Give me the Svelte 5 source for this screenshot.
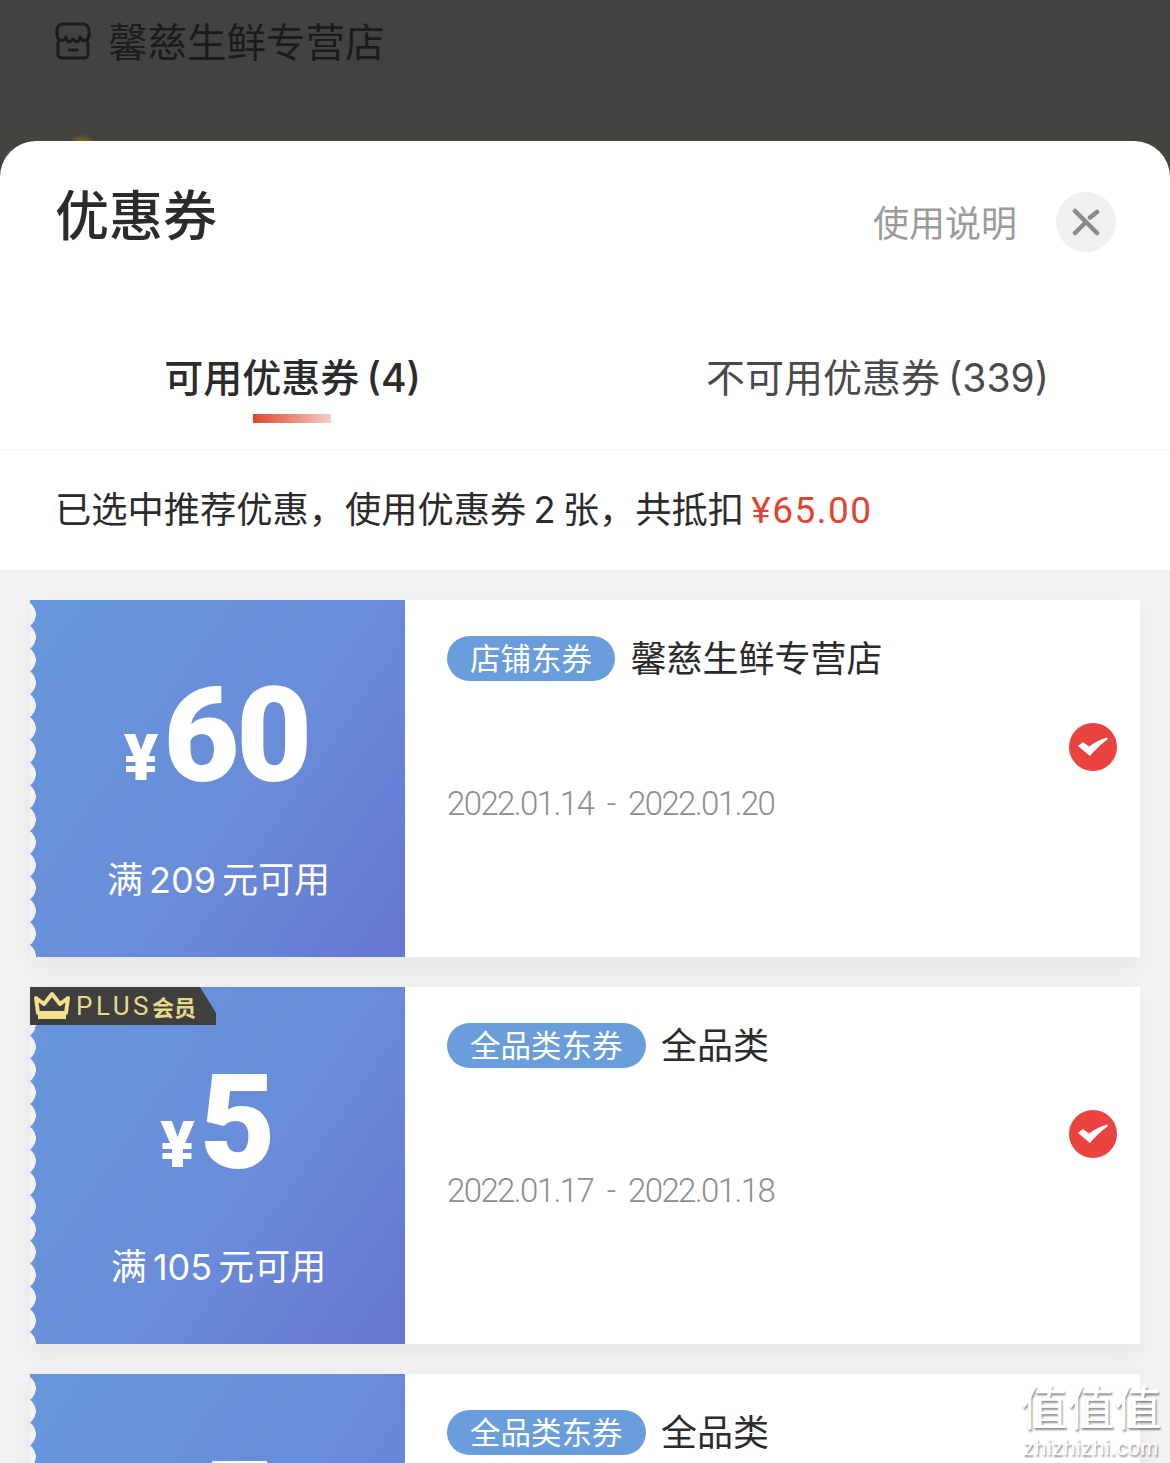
<script>
  const coupons = [
    { amount: '60', min: '满 209 元可用', tag: '店铺东券', name: '馨慈生鲜专营店', date: '2022.01.14 - 2022.01.20', plus: false },
    { amount: '5', min: '满 105 元可用', tag: '全品类东券', name: '全品类', date: '2022.01.17 - 2022.01.18', plus: true },
    { amount: '5', min: '满 105 元可用', tag: '全品类东券', name: '全品类', date: '2022.01.17 - 2022.01.18', plus: false }
  ];
</script>

<div class="page">
  <header class="shop">
    <svg class="shop-icon" viewBox="0 0 36 38" width="36" height="38" fill="none" stroke="#1b1b1b" stroke-width="3" stroke-linecap="round" stroke-linejoin="round">
      <path d="M2 13V8a6 6 0 0 1 6-6h20a6 6 0 0 1 6 6v5" />
      <path d="M2 13c1 7 7 7 9 2c2 6 3 6 7 2c4 4 5 4 7-2c2 5 8 5 9-2" />
      <path d="M3 20v12a4 4 0 0 0 4 4h22a4 4 0 0 0 4-4V20" />
      <path d="M14 28h8" />
    </svg>
    <span>馨慈生鲜专营店</span>
  </header>

  <section class="sheet">
    <div class="head">
      <h1>优惠券</h1>
      <div class="head-right">
        <span class="help">使用说明</span>
        <button class="close" aria-label="关闭">
          <svg viewBox="0 0 28 28" width="28" height="28" stroke="#8a8a8a" stroke-width="4.500" stroke-linecap="round">
            <path d="M3 3l22 22M3 25l9-9M18 9.500l7-5.500" />
          </svg>
        </button>
      </div>
    </div>

    <nav class="tabs">
      <div class="tab active">可用优惠券 (4)<i></i></div>
      <div class="tab">不可用优惠券 (339)</div>
    </nav>

    <p class="notice">已选中推荐优惠，使用优惠券 2 张，共抵扣 <b>¥65.00</b></p>

    <div class="list">
      {#each coupons as c}
        <article class="coupon">
          {#if c.plus}
            <div class="plus">
              <svg viewBox="0 0 38 30" width="38" height="30" fill="none" stroke="#f2e08e" stroke-width="4" stroke-linejoin="round">
                <path d="M3 7l8 6 8-10 8 10 8-6-2 15H5z" />
                <path d="M5 26h28" />
              </svg>
              <span class="plus-word">PLUS</span><span class="plus-cn">会员</span>
            </div>
          {/if}
          <div class="value">
            <div class="price"><span class="yen">¥</span><span class="num">{c.amount}</span></div>
            <div class="min">{c.min}</div>
          </div>
          <div class="info">
            <div class="title"><span class="tag">{c.tag}</span><span class="name">{c.name}</span></div>
            <div class="date">{c.date}</div>
          </div>
          <div class="check">
            <svg viewBox="0 0 48 48" width="48" height="48">
              <circle cx="24" cy="24" r="24" fill="#ea4340" />
              <path d="M9 23l5-4 6 4.500C26 19 32 16 38 14.500l1 1.500C32 21 26 27 21 33z" fill="#fff" />
            </svg>
          </div>
        </article>
      {/each}
    </div>
  </section>

  <div class="watermark">
    <span class="wm-big">值值值</span>
    <span class="wm-small">zhizhizhi.com</span>
  </div>
</div>

<style>
  :global(body) {
    margin: 0;
    background: #f2f2f2;
  }

  .page {
    position: relative;
    width: 1170px;
    height: 1463px;
    overflow: hidden;
    background: radial-gradient(circle 16px at 82px 150px, #7a6128 60%, transparent), linear-gradient(#424242 105px, #44433f 141px, #44433f 200px);
    font-family: "Inter", "Noto Sans CJK SC", "Noto Sans", sans-serif;
  }

  .shop {
    height: 141px;
    box-sizing: border-box;
    padding: 22px 0 0 55px;
    display: flex;
    align-items: flex-start;
    gap: 17px;
    color: #1b1b1b;
    font-size: 39.500px;
    line-height: 42px;
  }

  .sheet {
    background: #fff;
    border-radius: 36px 36px 0 0;
    overflow: hidden;
  }

  .head {
    height: 166px;
    box-sizing: border-box;
    padding: 44px 54px 0 55px;
    display: flex;
    justify-content: space-between;
    align-items: flex-start;
  }

  h1 {
    margin: 0;
    font-size: 54px;
    line-height: 64px;
    font-weight: 500;
    color: #2b2b2b;
  }

  .head-right {
    display: flex;
    align-items: flex-start;
    gap: 39px;
    margin-top: 7px;
  }

  .help {
    font-size: 36px;
    line-height: 64px;
    color: #9b9b9b;
  }

  .close {
    width: 60px;
    height: 60px;
    border: 0;
    padding: 0;
    border-radius: 50%;
    background: #f0f0f0;
    display: flex;
    align-items: center;
    justify-content: center;
  }

  .tabs {
    height: 142px;
    display: grid;
    grid-template-columns: 585px 585px;
    border-bottom: 1px solid #eee;
  }

  .tab {
    position: relative;
    text-align: center;
    padding-top: 44px;
    font-size: 39px;
    line-height: 54px;
    color: #4a4a4a;
    word-spacing: -3px;
  }

  .tab.active {
    font-weight: 500;
    color: #2b2b2b;
  }

  .tab i {
    position: absolute;
    left: 253px;
    top: 107px;
    width: 78px;
    height: 9px;
    background: linear-gradient(90deg, #e0452f, #f6cfc8);
  }

  .notice {
    margin: 0;
    height: 120px;
    box-sizing: border-box;
    padding: 0 0 0 55px;
    font-size: 36.250px;
    line-height: 120px;
    color: #2b2b2b;
    word-spacing: -3px;
  }

  .notice b {
    font-family: "Roboto", "Noto Sans", sans-serif;
    font-weight: 400;
    color: #df4530;
    font-size: 37px;
    letter-spacing: 1.500px;
  }

  .list {
    background: #f2f2f2;
    padding: 30px 30px 0;
    display: flex;
    flex-direction: column;
    gap: 30px;
  }

  .coupon {
    position: relative;
    height: 357px;
    flex: none;
    display: flex;
    background: #fff;
    box-shadow: 0 10px 26px rgba(0, 0, 0, 0.05);
  }

  .value {
    position: relative;
    width: 375px;
    flex: none;
    background: linear-gradient(125deg, #6697dc 0%, #6a8dd9 55%, #6776d2 100%);
    color: #fff;
    text-align: center;
  }

  .value::before {
    content: "";
    position: absolute;
    left: 0;
    top: 3px;
    bottom: 0;
    width: 6px;
    background: radial-gradient(circle 14px at -8px 50%, #f2f2f2 97%, transparent 100%) 0 0 / 6px 22.800px repeat-y;
  }

  .price {
    height: 200px;
    display: flex;
    justify-content: center;
    align-items: flex-start;
    padding-right: 2px;
    font-family: "Roboto", "Noto Sans", sans-serif;
    font-weight: 900;
  }

  .yen {
    font-size: 64px;
    line-height: 64px;
    margin-top: 127px;
    margin-right: 5px;
    font-weight: 900;
  }

  .num {
    font-size: 131px;
    line-height: 131px;
    margin-top: 71px;
    letter-spacing: -3px;
  }

  .min {
    margin-top: 53px;
    padding-left: 2px;
    font-size: 36px;
    line-height: 54px;
    word-spacing: -4px;
  }

  .plus {
    position: absolute;
    z-index: 2;
    left: 0;
    top: 0;
    width: 186px;
    height: 38px;
    box-sizing: border-box;
    padding-left: 3px;
    background: #3f3f3f;
    clip-path: polygon(0 0, 170px 0, 186px 26px, 186px 38px, 0 38px);
    display: flex;
    align-items: center;
    color: #e7d98b;
  }

  .plus-word {
    font-family: "Roboto", sans-serif;
    font-size: 26px;
    letter-spacing: 3.500px;
    margin-left: 5px;
  }

  .plus-cn {
    font-size: 22px;
    font-weight: 700;
  }

  .info {
    flex: 1;
    padding: 36px 0 0 42px;
  }

  .title {
    height: 45px;
    display: flex;
    align-items: flex-start;
    gap: 15.500px;
  }

  .tag {
    height: 45px;
    padding: 0 23px;
    border-radius: 23px;
    background: #6a9ddc;
    color: #fff;
    font-size: 30.500px;
    line-height: 46px;
  }

  .name {
    font-size: 36px;
    line-height: 47px;
    color: #2b2b2b;
  }

  .date {
    margin-top: 103px;
    font-family: "Roboto", sans-serif;
    font-weight: 300;
    font-size: 33px;
    line-height: 40px;
    letter-spacing: -1.600px;
    word-spacing: 7px;
    color: #8e8e8e;
  }

  .check {
    position: absolute;
    right: 23px;
    top: 123px;
    height: 48px;
  }

  .watermark {
    position: absolute;
    right: 8px;
    bottom: 4px;
    width: 142px;
    text-align: center;
    color: #fff;
    text-shadow: 1px 2px 2px rgba(0, 0, 0, 0.45);
    font-family: "Noto Sans CJK SC", sans-serif;
  }

  .wm-big {
    display: block;
    font-size: 47px;
    line-height: 50px;
    margin-bottom: 7px;
  }

  .wm-small {
    display: block;
    font-family: "Liberation Sans", sans-serif;
    font-size: 21.500px;
    line-height: 22px;
    letter-spacing: 0.500px;
  }
</style>
